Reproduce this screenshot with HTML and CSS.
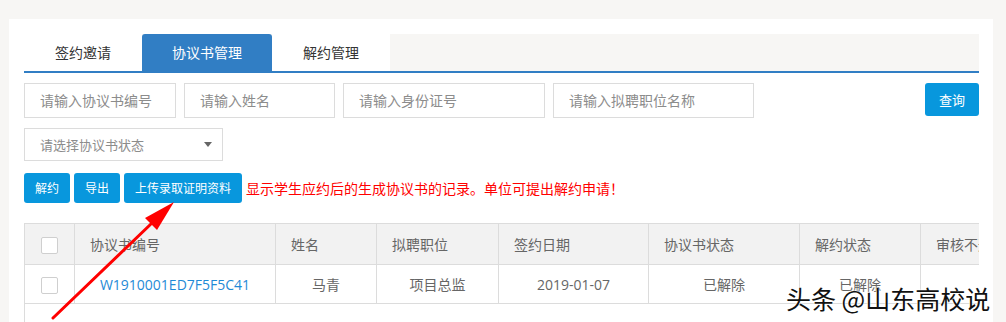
FILE: index.html
```html
<!DOCTYPE html>
<html lang="zh-CN">
<head>
  <meta charset="UTF-8">
  <meta name="viewport" content="width=device-width, initial-scale=1">
  <title>协议书管理</title>
  <link rel="stylesheet" href="styles.css">
</head>
<body>

<div class="panel">
  <div class="tabs">
    <div class="tab">签约邀请</div>
    <div class="tab active">协议书管理</div>
    <div class="tab">解约管理</div>
  </div>

  <div class="search">
    <input type="text" class="w152" placeholder="请输入协议书编号">
    <input type="text" class="w151" placeholder="请输入姓名">
    <input type="text" class="w202" placeholder="请输入身份证号">
    <input type="text" class="w201" placeholder="请输入拟聘职位名称">
    <button class="btn query">查询</button>
  </div>

  <div class="select">
    <span>请选择协议书状态</span>
    <span class="caret"></span>
  </div>

  <div class="actions">
    <button class="btn">解约</button>
    <button class="btn">导出</button>
    <button class="btn">上传录取证明资料</button>
    <span class="tip">显示学生应约后的生成协议书的记录。单位可提出解约申请！</span>
  </div>

  <div class="grid">
    <table>
      <colgroup>
        <col class="c0">
        <col class="c1">
        <col class="c2">
        <col class="c3">
        <col class="c4">
        <col class="c5">
        <col class="c6">
        <col class="c7">
      </colgroup>
      <tr>
        <th class="first"><span class="check"></span></th>
        <th>协议书编号</th>
        <th>姓名</th>
        <th>拟聘职位</th>
        <th>签约日期</th>
        <th>协议书状态</th>
        <th>解约状态</th>
        <th>审核不通过原因</th>
      </tr>
      <tr>
        <td><span class="check"></span></td>
        <td><a href="#" class="link">W1910001ED7F5F5C41</a></td>
        <td>马青</td>
        <td>项目总监</td>
        <td>2019-01-07</td>
        <td>已解除</td>
        <td>已解除</td>
        <td></td>
      </tr>
    </table>
  </div>
</div>

<svg class="arrow" width="1006" height="322" viewBox="0 0 1006 322">
  <line x1="53" y1="318" x2="152" y2="223" stroke="#ff0000" stroke-width="3" stroke-linecap="round"/>
  <polygon points="174,202 145,218 157,230" fill="#ff0000"/>
</svg>

<div class="mark">头条 @山东高校说</div>

</body>
</html>
```

FILE: styles.css
```css
body {
  font-family: 'Open Sans', 'Noto Sans CJK SC', sans-serif;
  background-color: #f7f6f4;
  margin: 0;
  padding: 19px 0 0 9px;
  color: #333;
  height: 303px;
  overflow: hidden;
  position: relative;
}
.panel {
  width: 955px;
  height: 300px;
  background: white;
  padding: 15px 14px 0 15px;
}
.tabs {
  display: flex;
  height: 37px;
  background: #f7f6f4;
  border-bottom: 2px solid #317ec4;
}
.tab {
  width: 118px;
  line-height: 37px;
  text-align: center;
  font-size: 14px;
  background: white;
  color: #333;
}
.tab.active {
  width: 130px;
  background: #317ec4;
  color: white;
  border-radius: 3px 3px 0 0;
}
.search {
  display: flex;
  align-items: flex-start;
  gap: 8px;
  margin-top: 10px;
}
.search input {
  box-sizing: border-box;
  height: 35px;
  border: 1px solid #dcdcdc;
  padding: 0 15px;
  font-family: inherit;
  font-size: 14px;
  color: #333;
  outline: none;
}
.search input::placeholder {
  color: #8c8c8c;
}
.w152 { width: 152px; }
.w151 { width: 151px; }
.w202 { width: 202px; }
.w201 { width: 201px; }
.btn {
  height: 30px;
  padding: 0 11px;
  border: none;
  border-radius: 3px;
  background: #0897dd;
  color: white;
  font-family: inherit;
  font-size: 12px;
  cursor: pointer;
}
.query {
  margin-left: auto;
  width: 54px;
  height: 33px;
  padding: 0;
  font-size: 13px;
}
.select {
  box-sizing: border-box;
  width: 199px;
  height: 33px;
  margin-top: 10px;
  border: 1px solid #dcdcdc;
  padding: 0 10px 0 15px;
  display: flex;
  align-items: center;
  justify-content: space-between;
  font-size: 13px;
  color: #8c8c8c;
}
.caret {
  width: 0;
  height: 0;
  border-left: 4px solid transparent;
  border-right: 4px solid transparent;
  border-top: 5px solid #666;
}
.actions {
  display: flex;
  align-items: center;
  gap: 4px;
  margin-top: 12px;
}
.tip {
  color: #ff0000;
  font-size: 14px;
}
.grid {
  width: 955px;
  margin-top: 20px;
  height: 100px;
  overflow: hidden;
  border-left: 1px solid #dcdcdc;
  border-top: 1px solid #dcdcdc;
  box-sizing: border-box;
}
table {
  border-collapse: collapse;
  table-layout: fixed;
  width: 1046px;
  margin: -1px 0 0 -1px;
  font-size: 14px;
}
.c0 { width: 50px; }
.c1 { width: 201px; }
.c2 { width: 101px; }
.c3 { width: 122px; }
.c4 { width: 150px; }
.c5 { width: 151px; }
.c6 { width: 121px; }
.c7 { width: 150px; }
th, td {
  border: 1px solid #dcdcdc;
  padding: 0;
  white-space: nowrap;
  overflow: hidden;
}
th {
  height: 40px;
  background: #f2f2f2;
  color: #666;
  font-weight: normal;
  text-align: left;
  padding-left: 15px;
}
td {
  height: 38px;
  text-align: center;
  color: #666;
}
th.first {
  padding-left: 0;
  text-align: center;
}
.check {
  display: inline-block;
  width: 17px;
  height: 17px;
  box-sizing: border-box;
  border: 1px solid #cfcfcf;
  border-radius: 2px;
  background: white;
  vertical-align: middle;
}
.link {
  color: #1f8ad6;
  text-decoration: none;
}
.arrow {
  position: absolute;
  left: 0;
  top: 0;
  pointer-events: none;
}
.mark {
  position: absolute;
  left: 786px;
  top: 281px;
  font-family: 'Noto Sans CJK SC', sans-serif;
  font-size: 25px;
  line-height: 34px;
  color: #111;
  text-shadow: 0 0 2px white, 0 0 2px white;
  white-space: nowrap;
}
```
